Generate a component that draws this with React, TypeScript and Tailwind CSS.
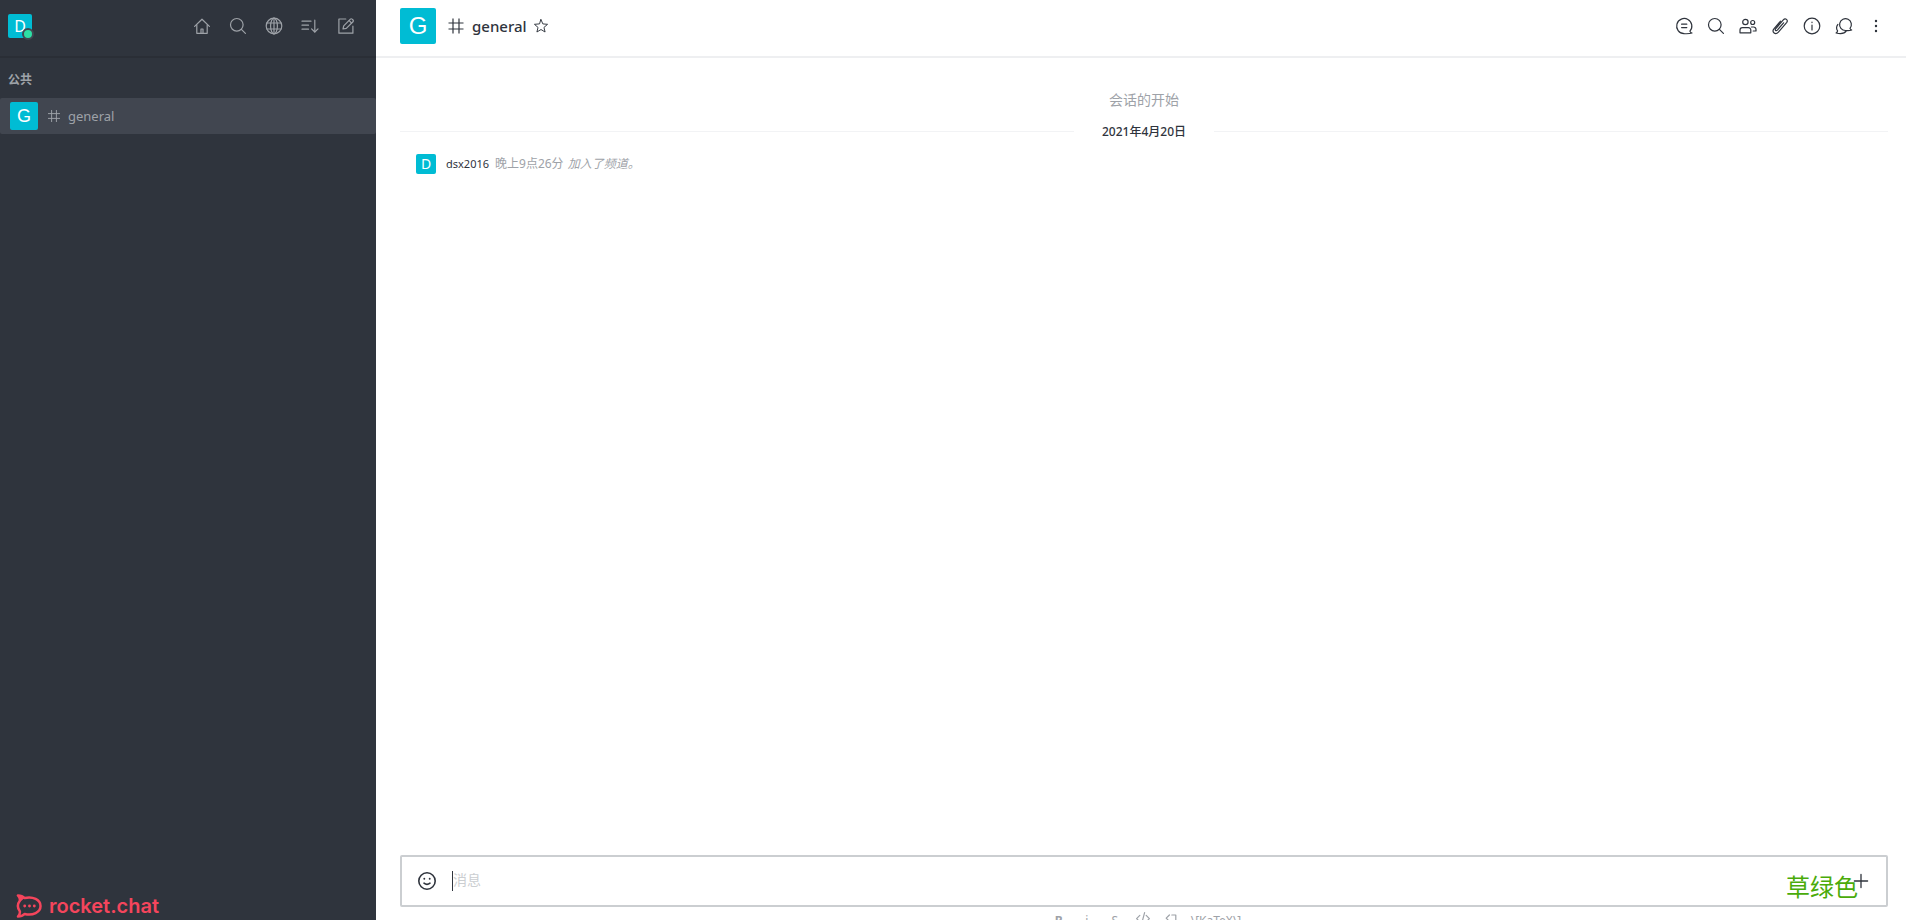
import type { ReactNode } from "react";

function Icon({ size = 20, children }: { size?: number; children: ReactNode }) {
  return (
    <svg
      width={size}
      height={size}
      viewBox="0 0 20 20"
      fill="none"
      stroke="currentColor"
      strokeWidth="1.2"
      strokeLinecap="round"
      strokeLinejoin="round"
      aria-hidden="true"
      className="shrink-0"
    >
      {children}
    </svg>
  );
}

const search = (
  <>
    <circle cx="8.8" cy="8.8" r="6.3" />
    <path d="M13.400 13.400 17.400 17.400" />
  </>
);

const hash = <path d="M7 2.500v15M13 2.500v15M2.500 7h15M2.500 13h15" strokeLinecap="butt" />;

const sidebarActions = [
  {
    label: "主页",
    icon: (
      <>
        <path d="M2.6 10.400 10 3.2 17.4 10.400" />
        <path d="M4.8 8.8v8.500h10.4V8.8" />
        <path d="M9 17v-4h2v4" />
      </>
    ),
  },
  { label: "搜索", icon: search },
  {
    label: "目录",
    icon: (
      <>
        <circle cx="10" cy="10" r="7.8" />
        <ellipse cx="10" cy="10" rx="3.4" ry="7.8" />
        <path d="M3 7h14M3 13h14M10 2.2v15.6" />
      </>
    ),
  },
  {
    label: "排序",
    icon: (
      <>
        <path d="M2 5.2h9M2 9.2h6.5M2 13.2h6.5M14.8 4.2v11.6" />
        <path d="m11.6 12.8 3.2 3.2 3.2-3.2" />
      </>
    ),
  },
  {
    label: "创建新的",
    icon: (
      <>
        <path d="M9.8 3H2.9v14.2h14v-7" />
        <path d="m7 13 .7-3.2 6.7-6.7a1.2 1.2 0 0 1 1.7 0l.9.9a1.2 1.2 0 0 1 0 1.7l-6.7 6.7z" />
        <path d="m13.2 4.7 2.3 2.3" />
      </>
    ),
  },
];

const roomActions = [
  {
    label: "话题",
    icon: (
      <>
        <path d="M15.900 15.200A7.600 7.600 0 1 0 10 17.700c2.800.1 5.400.3 8-.700-1.200-.2-1.900-.8-2.100-1.800z" />
        <path d="M7.600 8.200h5.200M7.600 11.600h5.200" />
      </>
    ),
  },
  { label: "搜索", icon: search },
  {
    label: "成员",
    icon: (
      <>
        <circle cx="7.400" cy="6" r="2.700" />
        <circle cx="14.700" cy="6.500" r="2" />
        <path d="M2 16.800v-2.800a2.400 2.400 0 0 1 2.400-2.400h6a2.400 2.400 0 0 1 2.400 2.400v2.800z" />
        <path d="M13.400 11h2.200a2.400 2.400 0 0 1 2.400 2.400v1.600h-2.800" />
      </>
    ),
  },
  {
    label: "文件",
    icon: (
      <path d="m13.600 6.800-6.300 7.300c-1.200 1.300-2.700 0-1.700-1.300l7.700-8.900c2.200-2.400 5.200.2 3.300 2.700l-8.200 9.500c-3 3.200-7 .1-4.500-3.300l6.600-7.600" />
    ),
  },
  {
    label: "聊天室信息",
    icon: (
      <>
        <circle cx="10" cy="10" r="7.800" />
        <path d="M10 9v5M10 6.200v.4" />
      </>
    ),
  },
  {
    label: "讨论",
    icon: (
      <>
        <path d="M16 12.400a5.900 5.900 0 1 0-4.400 2.100c2.100.2 4.200.2 6.100-.5-.9-.3-1.500-.8-1.700-1.600z" />
        <path d="M3.900 8.400c-1.500 2-1.500 4.800-.3 6.500-.2 1-.7 1.600-1.500 2.100 3.200.8 8.200 1.100 10.400-2.300" />
      </>
    ),
  },
  {
    label: "更多",
    icon: <path d="M10 5v.01M10 10v.01M10 15v.01" strokeWidth="2.400" />,
  },
];

const formats = [
  { label: "粗体", content: <b>B</b> },
  { label: "斜体", content: "i" },
  { label: "删除线", content: <s>S</s> },
  {
    label: "代码",
    content: (
      <Icon size={16}>
        <path d="M6 5.500 2 9.500l4 4M14 5.500l4 4-4 4M12 2 8 17" strokeWidth="1.500" />
      </Icon>
    ),
  },
  {
    label: "多行代码",
    content: (
      <Icon size={16}>
        <path d="M8 5 4 9l4 4M11 5h5v12H4" strokeWidth="1.500" />
      </Icon>
    ),
  },
];

function Sidebar() {
  return (
    <aside className="flex w-[376px] shrink-0 flex-col bg-[#2f343d] text-[#9ea2a8]">
      <header className="flex items-center justify-between border-b-2 border-[#2a2e36] pt-2 pr-5 pb-3 pl-2">
        <div className="flex h-9 items-center">
          <button
            aria-label="用户菜单"
            className="relative flex size-6 items-center justify-center rounded-xs bg-[#00bcd4] text-base text-white"
          >
            D
            <span className="absolute -right-0.5 -bottom-0.5 size-3 rounded-full border-2 border-[#414852] bg-[#2de0a5]" />
          </button>
        </div>
        <nav className="flex gap-4">
          {sidebarActions.map((action) => (
            <button key={action.label} aria-label={action.label}>
              <Icon>{action.icon}</Icon>
            </button>
          ))}
        </nav>
      </header>

      <h3 className="px-2 pt-3 pb-2 text-xs leading-5 font-semibold">公共</h3>
      <a
        href="#general"
        className="flex h-9 items-center rounded-xs bg-[#414650] pl-2.5"
      >
        <span className="flex size-7 items-center justify-center rounded-xs bg-[#00bcd4] font-['Liberation_Sans',sans-serif] text-lg text-white">
          G
        </span>
        <span className="ml-2 flex">
          <Icon size={16}>{hash}</Icon>
        </span>
        <span className="ml-1.5 pt-0.5 text-[13px]">general</span>
      </a>

      <footer className="mt-auto flex items-center gap-1.5 pb-0.5 pl-4 text-[#f5455c]">
        <svg width="27" height="24" viewBox="0 0 27 25" aria-hidden="true">
          <path
            d="M1.500 1.500c3 0 5.300 1 7 2.700 8.500-2 16.500 1.800 16.500 8.300s-8 10.300-16.500 8.300c-1.700 1.700-4 2.700-7 2.700 1.700-2 2.300-3.700 1.900-5.600-2.400-3.200-2.400-7.600 0-10.800.4-1.900-.2-3.600-1.900-5.600z"
            fill="none"
            stroke="currentColor"
            strokeWidth="2.600"
            strokeLinejoin="round"
          />
          <path d="M1 1c3 0 5.500 1 7.500 3L4 8C4 5 3 3 1 1z" fill="currentColor" />
          <g fill="currentColor">
            <circle cx="8.500" cy="12.500" r="1.500" />
            <circle cx="13.500" cy="12.500" r="1.500" />
            <circle cx="18.500" cy="12.500" r="1.500" />
          </g>
        </svg>
        <span className="font-['Inter',sans-serif] text-[20px] leading-6 font-semibold">
          rocket.chat
        </span>
      </footer>
    </aside>
  );
}

function RoomHeader() {
  return (
    <header className="flex items-center border-b-2 border-[#eeeff1] pt-2 pr-5 pb-3 pl-6 text-[#2f343d]">
      <span className="flex size-9 items-center justify-center rounded-xs bg-[#00bcd4] font-['Liberation_Sans',sans-serif] text-2xl text-white">
        G
      </span>
      <span className="ml-2.5 flex">
        <Icon>{hash}</Icon>
      </span>
      <h1 className="ml-1.5 text-[15px] font-medium">general</h1>
      <button aria-label="收藏" className="ml-1.5">
        <Icon size={16}>
          <path d="m10 2 2.300 5.400 5.900.5-4.500 3.900 1.400 5.700L10 14.400l-5.100 3.100 1.400-5.700L1.800 7.900l5.900-.5z" />
        </Icon>
      </button>
      <nav className="ml-auto flex gap-3">
        {roomActions.map((action) => (
          <button key={action.label} aria-label={action.label}>
            <Icon>{action.icon}</Icon>
          </button>
        ))}
      </nav>
    </header>
  );
}

function Messages() {
  return (
    <section className="flex-1 pt-[30px] pr-[18px] pl-6">
      <p className="text-center text-sm leading-6 text-[#9ea2a8]">会话的开始</p>
      <div className="mt-2 flex items-center">
        <hr className="flex-1 border-[#f2f3f5]" />
        <time className="w-35 pt-0.5 text-center text-xs leading-5 font-medium text-[#2f343d]">
          2021年4月20日
        </time>
        <hr className="flex-1 border-[#f2f3f5]" />
      </div>
      <div className="mt-3 flex items-center pl-4 text-xs leading-5 text-[#9ea2a8]">
        <span className="flex size-5 items-center justify-center rounded-xs bg-[#00bcd4] text-sm text-white">
          D
        </span>
        <a href="#dsx2016" className="ml-2.5 text-[11px] text-[#2f343d]">
          dsx2016
        </a>
        <time className="ml-1.5">晚上9点26分</time>
        <em className="ml-1">加入了频道。</em>
      </div>
    </section>
  );
}

function Composer() {
  return (
    <footer className="pr-[18px] pl-6">
      <div className="relative flex h-[52px] items-center rounded-xs border-2 border-[#cbced1] px-3.5 text-[#2f343d]">
        <button aria-label="表情">
          <svg
            width="22"
            height="22"
            viewBox="0 0 22 22"
            fill="none"
            stroke="currentColor"
            strokeWidth="1.600"
            strokeLinecap="round"
            aria-hidden="true"
          >
            <circle cx="11" cy="11" r="8.200" />
            <path d="M8.300 8.800v.01M13.700 8.800v.01" strokeWidth="1.900" />
            <path d="M8 13.200c1.800 1.500 4.200 1.500 6 0" />
          </svg>
        </button>
        <span className="ml-3.5 h-5 w-px bg-[#2f343d]" />
        <input
          aria-label="消息"
          placeholder="消息"
          className="min-w-0 flex-1 pb-0.5 text-sm outline-none placeholder:text-[#cbced1]"
        />
        <button aria-label="添加">
          <Icon size={22}>
            <path d="M10 4v12M4 10h12" />
          </Icon>
        </button>
        <span className="absolute right-7 bottom-0.5 text-2xl leading-8 text-[#4aab0a]">
          草绿色
        </span>
      </div>
      <div className="flex h-[13px] items-start justify-center gap-1 overflow-hidden pt-1 text-xs leading-5 text-[#9ea2a8]">
        {formats.map((format) => (
          <button
            key={format.label}
            aria-label={format.label}
            className="flex w-6 justify-center"
          >
            {format.content}
          </button>
        ))}
        <a href="#katex" className="ml-1">
          \[KaTeX\]
        </a>
      </div>
    </footer>
  );
}

export default function App() {
  return (
    <div className="flex h-screen overflow-hidden bg-white font-['Noto_Sans','Noto_Sans_CJK_SC',sans-serif]">
      <Sidebar />
      <main className="flex min-w-0 flex-1 flex-col">
        <RoomHeader />
        <Messages />
        <Composer />
      </main>
    </div>
  );
}
